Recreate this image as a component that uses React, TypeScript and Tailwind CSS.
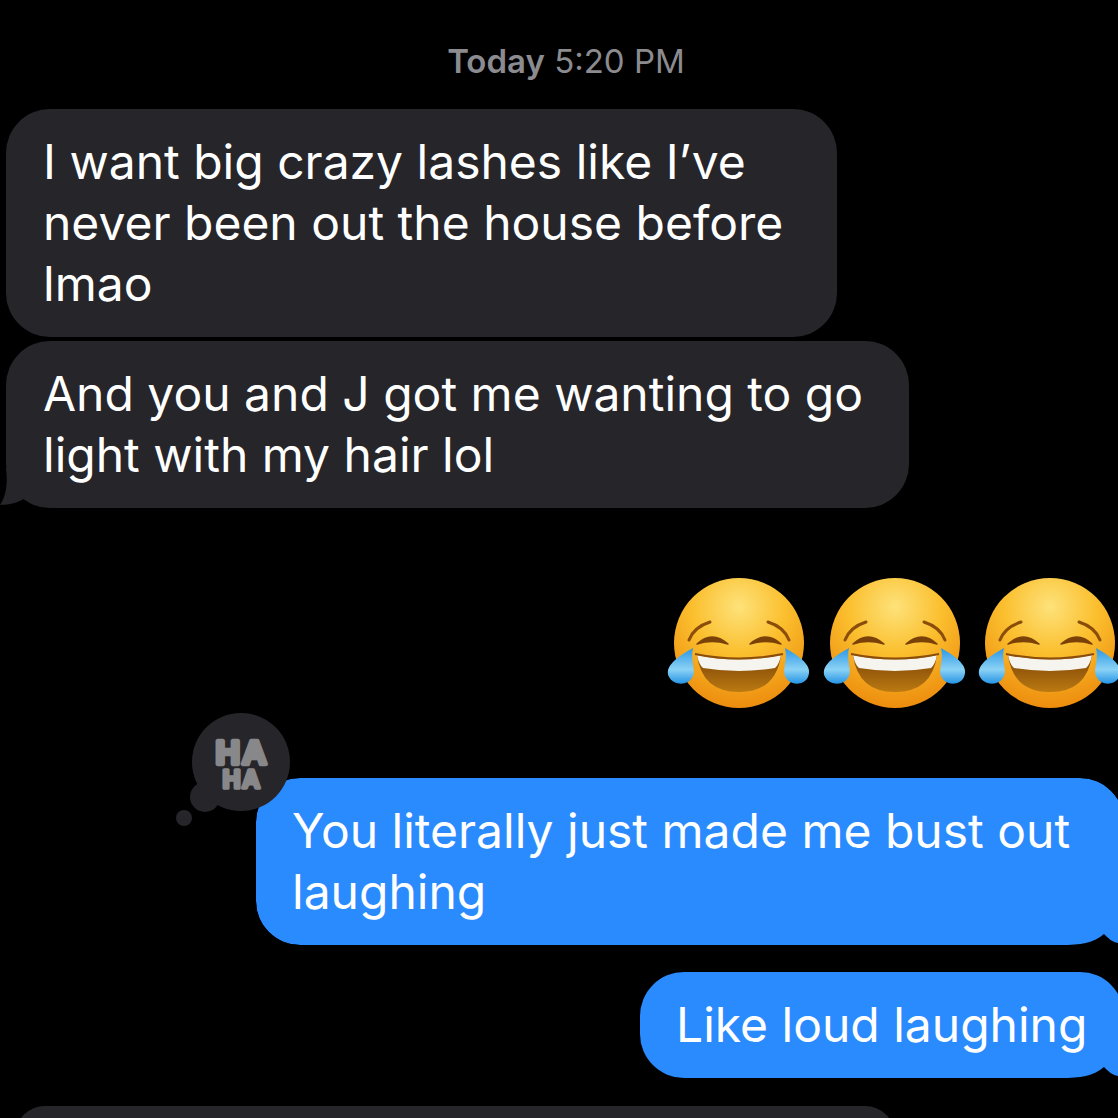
import React from "react";

const font = "font-['Inter','Liberation_Sans',sans-serif]";

const LaughEmoji = () => (
  <svg viewBox="0 0 160 150" className="w-[160px] h-[150px] shrink-0">
    <defs>
      <radialGradient id="face" cx="50%" cy="22%" r="80%">
        <stop offset="0%" stopColor="#fde27a" />
        <stop offset="45%" stopColor="#fbbf2e" />
        <stop offset="100%" stopColor="#ec8a0c" />
      </radialGradient>
      <linearGradient id="tear" x1="0" y1="0" x2="0" y2="1">
        <stop offset="0%" stopColor="#2a96e4" />
        <stop offset="60%" stopColor="#8bd2f5" />
        <stop offset="100%" stopColor="#2795e4" />
      </linearGradient>
      <linearGradient id="mouth" x1="0" y1="0" x2="0" y2="1">
        <stop offset="0%" stopColor="#7c4306" />
        <stop offset="100%" stopColor="#bb7a12" />
      </linearGradient>
    </defs>
    <circle cx="79" cy="73" r="65" fill="url(#face)" />
    <path d="M37 85 Q79 94 121 85 Q116 122 79 122 Q42 122 37 85Z" fill="url(#mouth)" />
    <path d="M37 85 Q79 94 121 85 Q119 95 115 98 Q79 104 43 98 Q39 95 37 85Z" fill="#f6f4ee" />
    <path d="M35 84 Q79 93 123 84" fill="none" stroke="#8a4d0a" strokeWidth="2" />
    <path d="M29 70 Q34 57 50 52" fill="none" stroke="#8a4d0a" strokeWidth="3" strokeLinecap="round" />
    <path d="M129 70 Q124 57 108 52" fill="none" stroke="#8a4d0a" strokeWidth="3" strokeLinecap="round" />
    <path d="M37 74 Q52 60 68 74 Q52 69 37 74Z" fill="#7a4208" stroke="#7a4208" strokeWidth="1.5" strokeLinejoin="round" />
    <path d="M121 74 Q106 60 90 74 Q106 69 121 74Z" fill="#7a4208" stroke="#7a4208" strokeWidth="1.5" strokeLinejoin="round" />
    <path d="M33 78 C30 90 36 100 33 106 C29 116 14 116 9 107 C5 98 12 90 33 78Z" fill="url(#tear)" />
    <path d="M125 78 C128 90 122 100 125 106 C129 116 144 116 148 107 C152 98 146 90 125 78Z" fill="url(#tear)" />
  </svg>
);

const HahaBadge = () => (
  <div className="absolute left-[-80px] top-[-70px] w-[120px] h-[120px]">
    <svg viewBox="0 0 120 120" className="absolute inset-0 w-full h-full">
      <circle cx="8" cy="110" r="8" fill="#26252a" />
      <circle cx="29" cy="89" r="15" fill="#26252a" />
      <circle cx="65" cy="54" r="49" fill="#26252a" />
      <g
        fontFamily="'Liberation Sans', sans-serif"
        fontWeight="700"
        textAnchor="middle"
        fill="#88888b"
        stroke="#88888b"
        strokeLinejoin="round"
        strokeLinecap="round"
      >
        <text x="66" y="56" fontSize="34" strokeWidth="4.5" letterSpacing="2">HA</text>
        <text x="66" y="80" fontSize="25" strokeWidth="3.5" letterSpacing="1.5">HA</text>
      </g>
    </svg>
  </div>
);

const BubbleNotch = () => (
  <svg viewBox="0 0 60 30" className="absolute right-[6px] bottom-0 w-[60px] h-[30px]">
    <path d="M3 30 C22 30 36 28 46 19 C50 23 54 27 60 28 L60 30Z" fill="#000" />
  </svg>
);

const App = () => {
  return (
    <div className={`w-[1118px] h-[1118px] overflow-hidden bg-black text-white ${font}`}>
      <div className="h-[109px] pt-[41px] pl-[14px] text-center text-[33px] leading-[40px] text-[#8b8b90]">
        <span className="font-semibold">Today</span> 5:20 PM
      </div>

      <div className="ml-[6px] w-[831px] h-[228px] rounded-[44px] bg-[#26252a] pl-[37px] pt-[22px] text-[48px] leading-[61px]">
        I want big crazy lashes like I’ve
        <br />
        never been out the house before
        <br />
        lmao
      </div>

      <div className="relative mt-[4px] ml-[6px] w-[903px] h-[167px] rounded-[44px] bg-[#26252a] pl-[37px] pt-[22px] text-[48px] leading-[61px]">
        <svg viewBox="0 0 60 40" className="absolute left-[-6px] bottom-0 w-[60px] h-[40px]">
          <path d="M6 0 C8 16 6 28 0 37 C10 37 20 34 27 29 C33 36 44 40 60 40 L60 0Z" fill="#26252a" />
        </svg>
        <div className="relative">
          And you and J got me wanting to go
          <br />
          light with my hair lol
        </div>
      </div>

      <div className="mt-[62px] ml-[660px] flex w-[500px] h-[150px] -space-x-[4.5px]">
        <LaughEmoji />
        <LaughEmoji />
        <LaughEmoji />
      </div>

      <div className="relative mt-[58px] ml-[256px] w-[868px] h-[167px] rounded-[44px] rounded-br-none bg-[#2a8bff] pl-[36px] pt-[22px] text-[48px] leading-[61px] outline-[3px] outline-black">
        You literally just made me bust out
        <br />
        laughing
        <BubbleNotch />
        <HahaBadge />
      </div>

      <div className="relative mt-[27px] ml-[640px] w-[484px] h-[106px] rounded-[44px] rounded-br-none bg-[#2a8bff] pl-[36px] pt-[22px] text-[48px] leading-[61px]">
        Like loud laughing
        <BubbleNotch />
      </div>

      <div className="mt-[28px] ml-[15px] w-[880px] h-[60px] rounded-[40px] bg-[#26252a]" />
    </div>
  );
};

export default App;
